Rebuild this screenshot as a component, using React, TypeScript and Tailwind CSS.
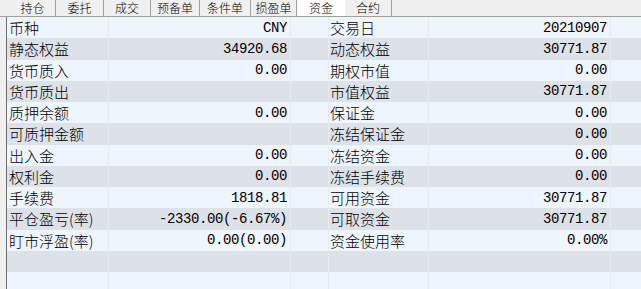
import React from "react";

const tabs: { label: string; w: string; active?: boolean; border?: boolean }[] = [
  { label: "持仓", w: "w-[46px]", border: true },
  { label: "委托", w: "w-[48px]", border: true },
  { label: "成交", w: "w-[47px]", border: true },
  { label: "预备单", w: "w-[49px]", border: true },
  { label: "条件单", w: "w-[51px]", border: true },
  { label: "损盈单", w: "w-[46px]", border: true },
  { label: "资金", w: "w-[48px]", active: true },
  { label: "合约", w: "w-[47px]", border: true },
];

const rows: [string, string, string, string][] = [
  ["币种", "CNY", "交易日", "20210907"],
  ["静态权益", "34920.68", "动态权益", "30771.87"],
  ["货币质入", "0.00", "期权市值", "0.00"],
  ["货币质出", "", "市值权益", "30771.87"],
  ["质押余额", "0.00", "保证金", "0.00"],
  ["可质押金额", "", "冻结保证金", "0.00"],
  ["出入金", "0.00", "冻结资金", "0.00"],
  ["权利金", "0.00", "冻结手续费", "0.00"],
  ["手续费", "1818.81", "可用资金", "30771.87"],
  ["平仓盈亏(率)", "-2330.00(-6.67%)", "可取资金", "30771.87"],
  ["盯市浮盈(率)", "0.00(0.00)", "资金使用率", "0.00%"],
  ["", "", "", ""],
  ["", "", "", ""],
  ["", "", "", ""],
];

const cjk = "font-['Noto_Sans_CJK_SC',sans-serif] font-light";
const mono = "font-['Liberation_Mono','Noto_Sans_CJK_SC',monospace]";

export default function App() {
  return (
    <div className="w-[641px] h-[289px] overflow-hidden bg-[#f0f0f0] text-black">
      <div className="h-[17px] flex border-b border-[#a0a0a0] pl-[10px] bg-[#f0f0f0]">
        {tabs.map((t) => (
          <div
            key={t.label}
            className={`${t.w} h-[16px] flex items-center justify-center text-[12px] leading-none ${cjk} ${
              t.active ? "bg-white" : ""
            } ${t.border ? "border-r border-[#a0a0a0]" : ""}`}
          >
            {t.label}
          </div>
        ))}
      </div>
      <div className="flex h-[272px]">
        <div className="w-[6px] shrink-0 bg-[#f0f0f0]" />
        <div className="flex-1 flex flex-col border-l border-[#6e6e6e] overflow-hidden">
          {rows.map((r, i) => (
            <div
              key={i}
              className={`h-[21.25px] shrink-0 flex ${i % 2 === 0 ? "bg-[#eff5fd]" : "bg-[#dde2e9]"}`}
            >
              <div className={`w-[102px] shrink-0 border-r border-[#e6ebf2] pl-[2px] flex items-center text-[15px] leading-none whitespace-nowrap ${cjk}`}>
                {r[0]}
              </div>
              <div className={`w-[182px] shrink-0 border-r border-[#e6ebf2] pr-[3px] flex items-center justify-end text-[14px] tracking-[-0.4px] leading-none whitespace-nowrap ${mono}`}>
                {r[1]}
              </div>
              <div className="w-[38px] shrink-0 border-r border-[#e6ebf2]" />
              <div className={`w-[100px] shrink-0 border-r border-[#e6ebf2] pl-[1px] flex items-center text-[15px] leading-none whitespace-nowrap ${cjk}`}>
                {r[2]}
              </div>
              <div className={`w-[182px] shrink-0 border-r border-[#e6ebf2] pr-[3px] flex items-center justify-end text-[14px] tracking-[-0.4px] leading-none whitespace-nowrap ${mono}`}>
                {r[3]}
              </div>
              <div className="flex-1" />
            </div>
          ))}
        </div>
      </div>
    </div>
  );
}
